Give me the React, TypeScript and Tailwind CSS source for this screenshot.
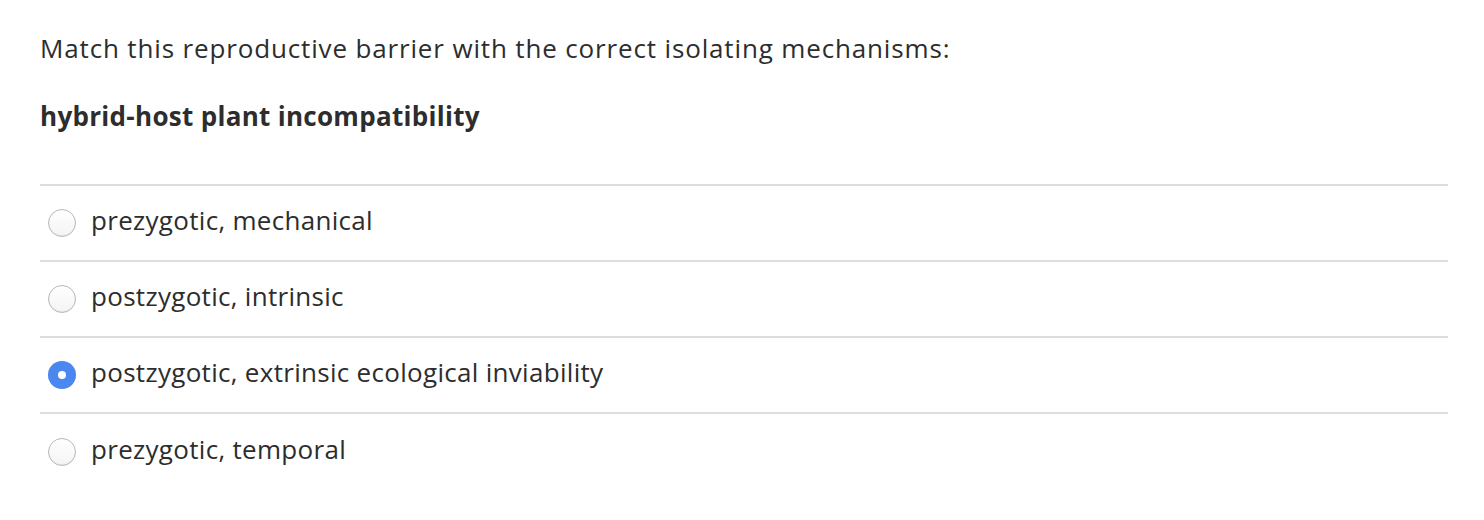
import React from "react";

const options = [
  { label: "prezygotic, mechanical", checked: false },
  { label: "postzygotic, intrinsic", checked: false },
  { label: "postzygotic, extrinsic ecological inviability", checked: true },
  { label: "prezygotic, temporal", checked: false },
];

function Radio({ checked }: { checked: boolean }) {
  if (checked) {
    return (
      <span className="flex h-[28px] w-[28px] shrink-0 items-center justify-center rounded-full bg-[#4a87ee]">
        <span className="h-[8px] w-[8px] rounded-full bg-white" />
      </span>
    );
  }
  return (
    <span className="h-[28px] w-[28px] shrink-0 rounded-full border border-[#b8b8b8] bg-gradient-to-b from-white to-[#f4f4f4] shadow-[inset_0_-1px_1px_rgba(0,0,0,0.06)]" />
  );
}

export default function App() {
  return (
    <div
      className="min-h-screen bg-white pl-[40px] pr-[36px] pt-[28px] tracking-[0.3px] text-[#2d2d2d]"
      style={{ fontFamily: '"Open Sans", "Liberation Sans", sans-serif' }}
    >
      <p className="text-[26px] leading-[40px] tracking-[0.85px]">
        Match this reproductive barrier with the correct isolating mechanisms:
      </p>
      <p className="mt-[28px] text-[26px] font-bold leading-[40px]">
        hybrid-host plant incompatibility
      </p>
      <ul className="mt-[48px] border-t-2 border-[#dddddd]">
        {options.map((o) => (
          <li
            key={o.label}
            className="flex h-[76px] items-center gap-[15px] border-b-2 border-[#dddddd] pl-[8px] last:border-b-0"
          >
            <Radio checked={o.checked} />
            <span className="mb-[6px] text-[26px] leading-[40px]">{o.label}</span>
          </li>
        ))}
      </ul>
    </div>
  );
}
